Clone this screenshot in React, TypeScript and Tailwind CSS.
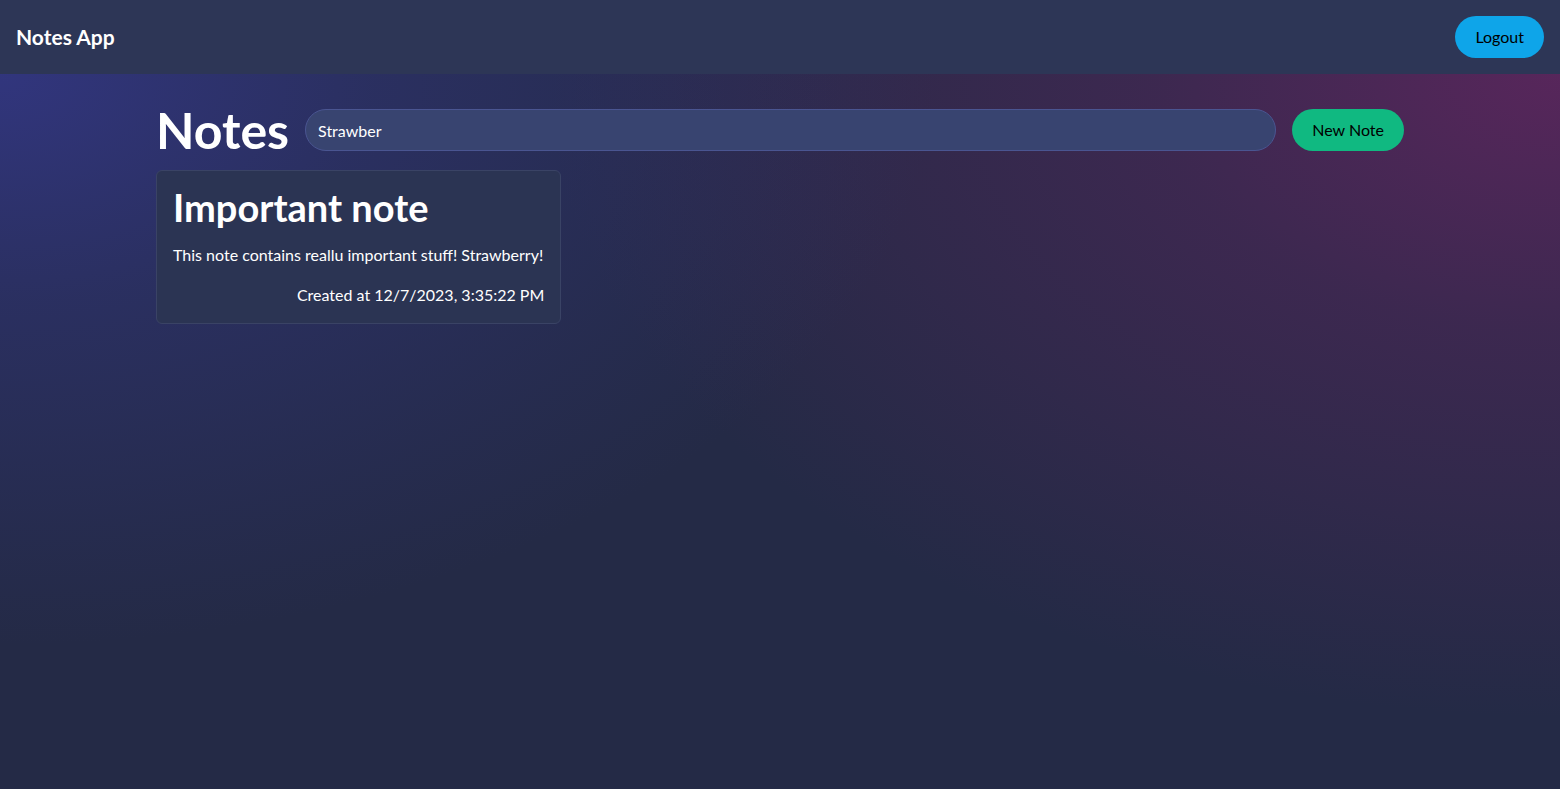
import React from "react";

export default function App() {
  return (
    <div
      className="min-h-[789px] w-full bg-[#242a46] text-white"
      style={{ fontFamily: "Lato, 'Noto Sans', sans-serif" }}
    >
      <header className="flex h-[74px] items-center justify-between bg-[#2d3656] px-4 relative z-10">
        <span className="text-[21px] font-bold text-white">Notes App</span>
        <button className="h-[42px] rounded-full bg-[#0ea5e9] px-5 text-[16px] text-black">Logout</button>
      </header>
      <main className="relative min-h-[715px] bg-[radial-gradient(ellipse_60%_80%_at_0%_0%,rgba(50,54,128,0.95),rgba(50,54,128,0.45)_40%,rgba(50,54,128,0)_100%),radial-gradient(ellipse_65%_90%_at_100%_0%,rgba(90,38,92,0.95),rgba(90,38,92,0.45)_40%,rgba(90,38,92,0)_100%)]">
        <div className="mx-auto max-w-7xl px-4 pt-8">
          <div className="flex h-12 items-center gap-4">
            <h1 className="text-[50px] font-bold leading-none text-white">Notes</h1>
            <input
              className="h-[42px] flex-1 rounded-full border border-[#4a5591] bg-[#384470] px-3 text-[16px] text-white outline-none"
              defaultValue="Strawber"
            />
            <button className="h-[42px] rounded-full bg-[#10b981] px-5 text-[16px] text-black">New Note</button>
          </div>
          <div className="mt-4 grid grid-cols-3 gap-4">
            <div className="rounded-md border border-[#3a4365] bg-[#2b3453] p-4">
              <h2 className="text-[38px] font-bold leading-[40px] text-white">Important note</h2>
              <p className="mt-4 text-[16px] leading-6 text-white">This note contains reallu important stuff! Strawberry!</p>
              <p className="mt-4 text-right text-[16px] leading-6 text-white">Created at 12/7/2023, 3:35:22 PM</p>
            </div>
          </div>
        </div>
      </main>
    </div>
  );
}
